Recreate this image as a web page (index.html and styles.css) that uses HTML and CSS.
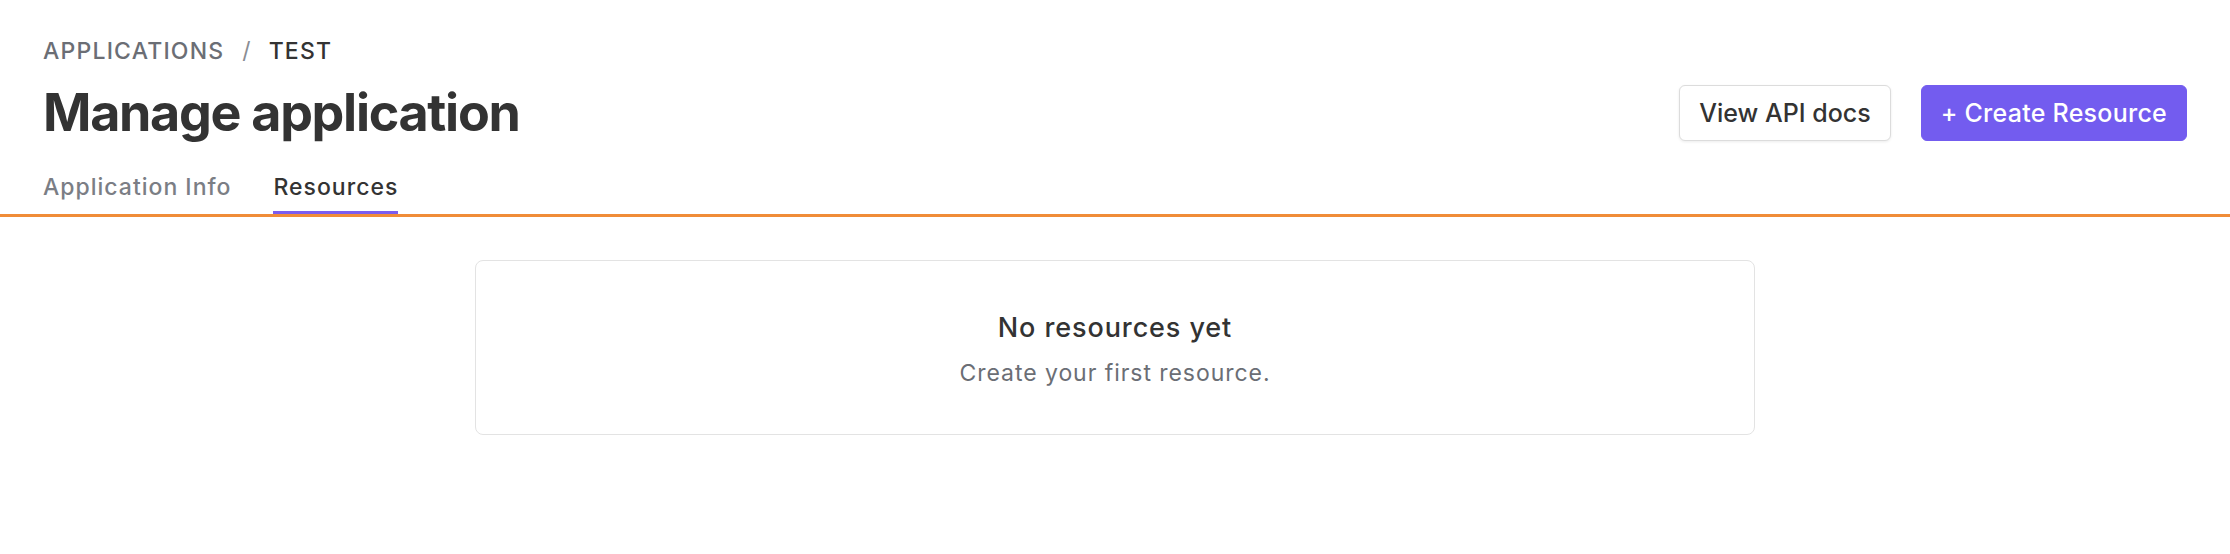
FILE: index.html
```html
<!DOCTYPE html>
<html>
<head>
<meta charset="utf-8">
<link rel="stylesheet" href="styles.css">
</head>
<body>
<header class="page-header">
  <nav class="breadcrumb">
    <span class="crumb">APPLICATIONS</span>
    <span class="sep">/</span>
    <span class="crumb current">TEST</span>
  </nav>
  <div class="title-row">
    <h1 class="title">Manage application</h1>
    <div class="actions">
      <button class="btn btn-secondary">View API docs</button>
      <button class="btn btn-primary">+ Create Resource</button>
    </div>
  </div>
  <div class="tabs">
    <a class="tab">Application Info</a>
    <a class="tab active">Resources</a>
  </div>
</header>
<main class="content">
  <section class="empty-card">
    <h2 class="empty-title">No resources yet</h2>
    <p class="empty-text">Create your first resource.</p>
  </section>
</main>
</body>
</html>
```
FILE: styles.css
```css
* { box-sizing: border-box; }
html, body { margin: 0; padding: 0; background: #ffffff; }
body {
  font-family: Inter, "Noto Sans", sans-serif;
  color: #333333;
}
.page-header {
  padding: 36px 43px 0 43px;
  border-bottom: 3px solid #f08c38;
}
.breadcrumb {
  display: flex;
  align-items: center;
  gap: 18px;
  font-size: 23px;
  line-height: 30px;
  font-weight: 500;
  letter-spacing: 1.2px;
}
.crumb { color: #6b6e75; }
.crumb.current { color: #333333; }
.sep { color: #8a8d93; font-weight: 400; letter-spacing: 0; }
.title-row {
  display: flex;
  align-items: center;
  justify-content: space-between;
  margin-top: 14px;
}
.title {
  margin: 0;
  font-size: 52px;
  line-height: 65px;
  font-weight: 700;
  letter-spacing: -1.3px;
  color: #333333;
}
.actions {
  display: flex;
  align-items: center;
  gap: 30px;
}
.btn {
  font-family: inherit;
  font-size: 25px;
  font-weight: 500;
  height: 56px;
  padding: 0 19px;
  border-radius: 6px;
  cursor: pointer;
}
.btn-secondary {
  background: #ffffff;
  color: #333333;
  border: 1px solid #dcdcdc;
  box-shadow: 0 1px 3px rgba(0,0,0,0.08);
}
.btn-primary {
  background: #735cef;
  color: #ffffff;
  border: 1px solid #735cef;
  letter-spacing: 0.25px;
}
.tabs {
  display: flex;
  gap: 42px;
  margin-top: 27px;
}
.tab {
  font-size: 23px;
  line-height: 30px;
  font-weight: 500;
  letter-spacing: 1px;
  color: #7b7e85;
  padding-bottom: 9px;
  border-bottom: 3px solid transparent;
}
.tab.active {
  color: #333333;
  border-bottom-color: #7b5cf0;
}
.content {
  display: flex;
  justify-content: center;
  padding-top: 43px;
}
.empty-card {
  width: 1280px;
  height: 175px;
  padding-top: 4px;
  border: 1px solid #e3e3e3;
  border-radius: 8px;
  display: flex;
  flex-direction: column;
  align-items: center;
  justify-content: center;
}
.empty-title {
  margin: 0;
  font-size: 27px;
  line-height: 34px;
  font-weight: 500;
  letter-spacing: 0.9px;
  color: #333333;
}
.empty-text {
  margin: 13px 0 0 0;
  font-size: 23px;
  line-height: 30px;
  letter-spacing: 0.95px;
  color: #6b6e75;
}
```
